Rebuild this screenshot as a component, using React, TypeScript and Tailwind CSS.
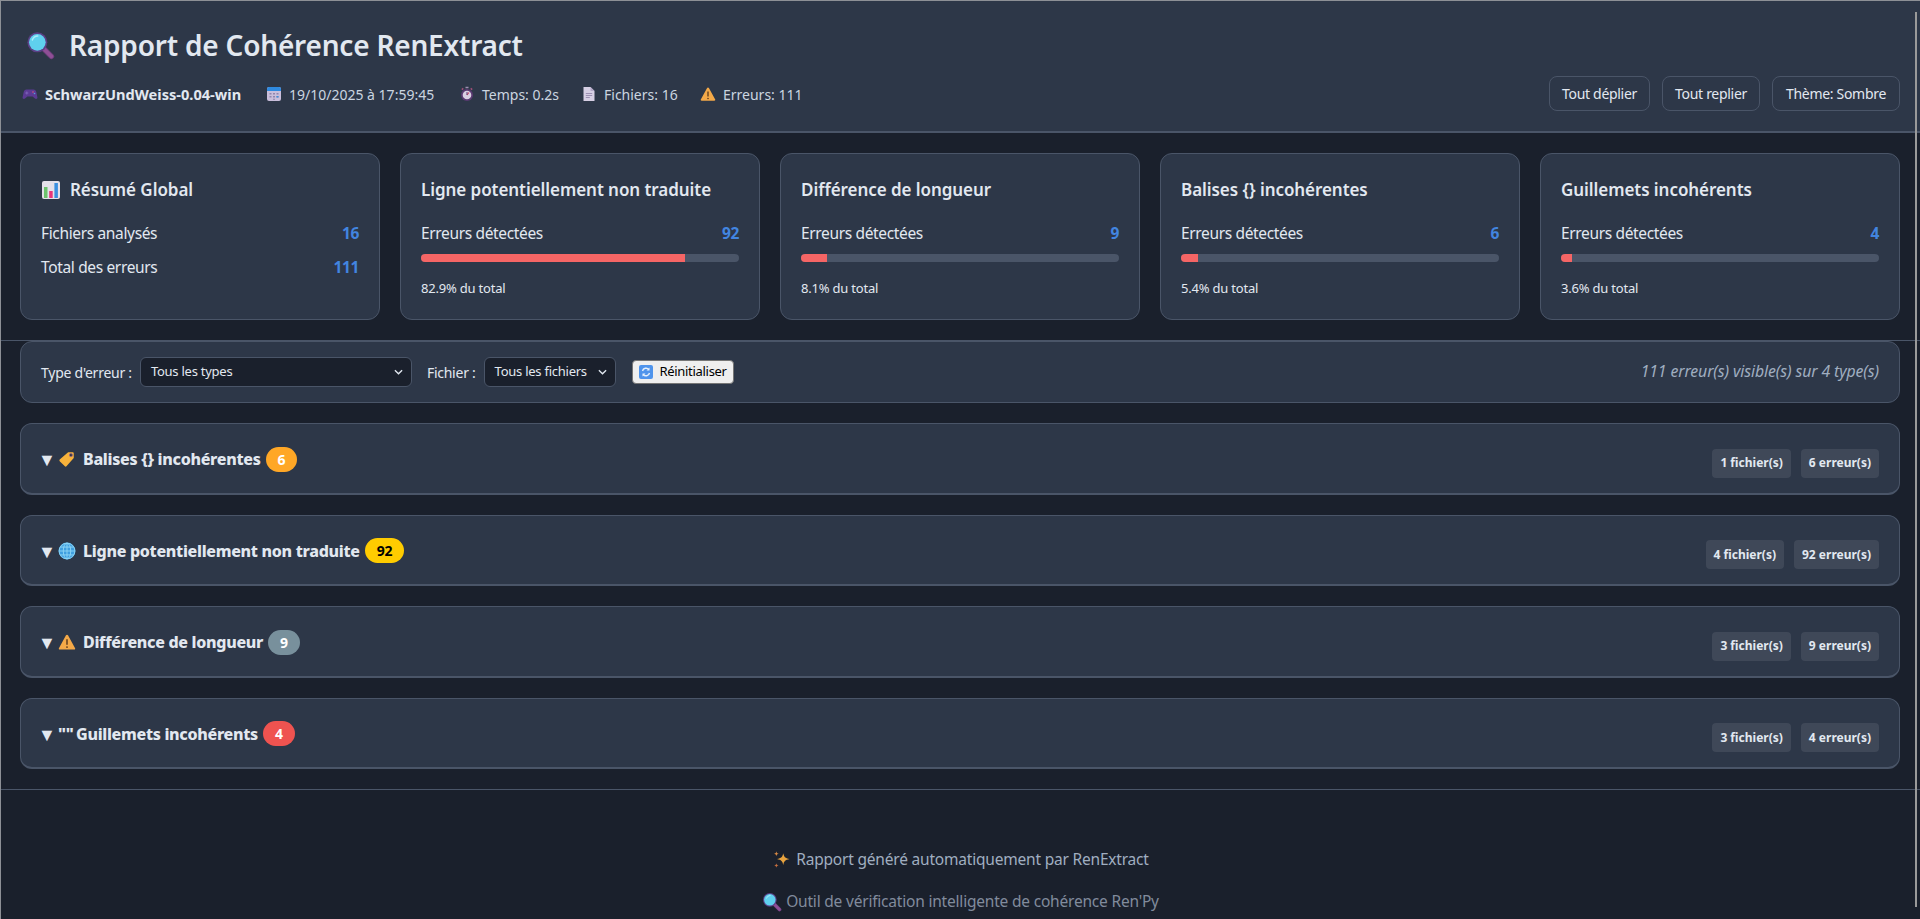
import type { ReactNode } from 'react';

const font = "font-['Noto_Sans','Open_Sans',sans-serif]";

function Loupe({ className }: { className: string }) {
  return (
    <svg viewBox="0 0 32 32" className={className}>
      <path d="M19 19l9 9" stroke="#6e3f7c" strokeWidth="6" strokeLinecap="round" />
      <path d="M20 20l8 8" stroke="#8f4f96" strokeWidth="4" strokeLinecap="round" />
      <circle cx="12.5" cy="12.5" r="11" fill="#5b3f86" />
      <circle cx="12.5" cy="12.5" r="9.2" fill="#5fd0ee" />
      <path d="M7 10a6.5 6.5 0 0 1 6-4.5" stroke="#a8ecfa" strokeWidth="1.6" fill="none" strokeLinecap="round" />
    </svg>
  );
}

function Gamepad() {
  return (
    <svg viewBox="0 0 16 16" className="h-4 w-4 shrink-0">
      <path d="M4.5 3.5h7c1.6 0 2.4 1 2.8 2.6l1.1 5.2c.3 1.4-1.3 2.3-2.4 1.3L10.6 10.500H5.400L3 12.600c-1.100 1-2.700.1-2.400-1.300l1.100-5.200C2.100 4.500 2.900 3.500 4.500 3.500z" fill="#5b3a93" />
      <path d="M3.300 7h3M4.800 5.500v3" stroke="#7d63b8" strokeWidth="1" />
      <circle cx="11" cy="6" r=".8" fill="#d9567c" />
      <circle cx="12.500" cy="7.500" r=".8" fill="#56a0d9" />
    </svg>
  );
}

function CalendarIcon() {
  return (
    <svg viewBox="0 0 16 16" className="h-4 w-4 shrink-0">
      <rect x="1" y="1" width="14" height="14" rx="2" fill="#c9bedb" />
      <path d="M1 5V3a2 2 0 0 1 2-2h10a2 2 0 0 1 2 2v2z" fill="#2f8ae0" />
      <path d="M3.500 7h2v1.500h-2zM7 7h2v1.500H7zM10.500 7h2v1.500h-2zM3.500 10h2v1.500h-2zM7 10h2v1.500H7zM10.500 10h2v1.500h-2zM7 12.800h2v1H7z" fill="#8f84ad" />
      <path d="M10.500 10h2v1.500h-2z" fill="#3f8fdc" />
    </svg>
  );
}

function Timer() {
  return (
    <svg viewBox="0 0 16 16" className="h-4 w-4 shrink-0">
      <path d="M6.500 1.500h3" stroke="#9d8fb0" strokeWidth="1.500" />
      <path d="M2.800 3.600l1.500-1.200M13.200 3.600l-1.500-1.200" stroke="#a34f7a" strokeWidth="1.500" />
      <circle cx="8" cy="9" r="6" fill="#5a3a72" />
      <circle cx="8" cy="9" r="4.300" fill="#d9cfe2" />
      <path d="M8 9l2-2.500" stroke="#d2405f" strokeWidth="1.200" />
      <path d="M8 6v3" stroke="#5a3a72" strokeWidth="1" />
    </svg>
  );
}

function Doc() {
  return (
    <svg viewBox="0 0 16 16" className="h-4 w-4 shrink-0">
      <path d="M2.500 1h7l4 4v10h-11z" fill="#d6cfe4" />
      <path d="M9.500 1l4 4h-4z" fill="#b4a9c9" />
      <path d="M4.800 7.500h6.400M4.800 9.500h6.400M4.800 11.500h4" stroke="#9c90b3" strokeWidth="1" />
    </svg>
  );
}

function Warning({ className = 'h-4 w-4' }: { className?: string }) {
  return (
    <svg viewBox="0 0 16 16" className={`${className} shrink-0`}>
      <path d="M8 1.500c.4 0 .7.200.9.600l6.300 11.400c.3.600-.1 1.200-.8 1.200H1.600c-.7 0-1.100-.6-.8-1.200L7.100 2.100c.2-.4.500-.6.900-.6z" fill="#f4a948" />
      <path d="M8 5.500v5" stroke="#5c3a1c" strokeWidth="1.300" />
      <circle cx="8" cy="12.500" r=".8" fill="#5c3a1c" />
    </svg>
  );
}

function BarChartIcon() {
  return (
    <svg viewBox="0 0 20 20" className="h-5 w-5 shrink-0">
      <rect x="1" y="1" width="18" height="18" rx="2" fill="#e4e0ea" />
      <rect x="3" y="7" width="3.500" height="11" fill="#6cc26c" />
      <rect x="8.200" y="11" width="3.500" height="7" fill="#e8357a" />
      <rect x="13.400" y="3" width="3.500" height="15" fill="#3b8fe0" />
    </svg>
  );
}

function RefreshIcon() {
  return (
    <svg viewBox="0 0 16 16" className="h-4 w-4 shrink-0">
      <rect x="1" y="1" width="14" height="14" rx="2" fill="#4f94ec" />
      <path d="M4.500 7a3.700 3.700 0 0 1 6.400-1.500M11.500 9a3.700 3.700 0 0 1-6.400 1.500" stroke="#e6f0fc" strokeWidth="1.400" fill="none" />
      <path d="M11.500 3.500v3h-3zM4.500 12.500v-3h3z" fill="#e6f0fc" />
    </svg>
  );
}

function Tag() {
  return (
    <svg viewBox="0 0 16 16" className="h-[18px] w-[18px] shrink-0">
      <path d="M9 2h4.200c.5 0 .8.300.8.800V7L7.500 14.500c-.4.400-1 .4-1.400 0L1.500 9.900c-.4-.4-.4-1 0-1.400z" fill="#f7b23b" />
      <circle cx="11.500" cy="4.500" r="1.400" fill="#2d3748" stroke="#a06a7a" strokeWidth=".8" />
    </svg>
  );
}

function Globe() {
  return (
    <svg viewBox="0 0 16 16" className="h-[18px] w-[18px] shrink-0" fill="none">
      <circle cx="8" cy="8" r="7.500" fill="#3f9fe0" />
      <g stroke="#8fd6f5" strokeWidth=".8">
        <circle cx="8" cy="8" r="7" />
        <ellipse cx="8" cy="8" rx="3.300" ry="7" />
        <path d="M8 1v14M1 8h14M2 4.500h12M2 11.500h12" />
      </g>
    </svg>
  );
}

function Sparkles() {
  return (
    <svg viewBox="0 0 16 16" className="h-5 w-5 shrink-0">
      <path d="M9 2.500c.6 3 1.500 3.900 5 4.700-3.500.8-4.400 1.700-5 4.800-.6-3.100-1.500-4-5-4.800 3.500-.8 4.400-1.700 5-4.700z" fill="#e8a33f" />
      <path d="M3.500 1c.2 1.300.6 1.700 2 2-1.400.3-1.800.7-2 2-.2-1.300-.6-1.700-2-2 1.400-.3 1.800-.7 2-2z" fill="#d98a45" />
      <path d="M3.500 10.500c.2 1.200.6 1.600 1.800 1.800-1.200.2-1.600.6-1.800 1.800-.2-1.200-.6-1.600-1.800-1.800 1.200-.2 1.600-.6 1.800-1.800z" fill="#c9703f" />
    </svg>
  );
}

function Meta({ icon, children, className }: { icon: ReactNode; children: ReactNode; className: string }) {
  return (
    <span className={`flex items-center gap-[7px] ${className}`}>
      {icon}
      {children}
    </span>
  );
}

function HeaderButton({ label, className }: { label: string; className: string }) {
  return (
    <button className={`h-[35px] rounded-lg border border-[#4a5568] text-[14px] tracking-[-0.3px] text-[#e2e8f0] ${className}`}>
      {label}
    </button>
  );
}

function StatCard({ title, count, pct }: { title: string; count: number; pct: number }) {
  return (
    <div className="h-[167px] w-[360px] rounded-xl border border-[#4a5568] bg-[#2d3748] p-5">
      <h3 className="mb-3 h-[32px] text-[17px] font-semibold leading-8 tracking-[-0.06px] text-[#e2e8f0]">{title}</h3>
      <div className="flex h-[32px] items-center justify-between text-[15.5px] tracking-[-0.35px] text-[#e2e8f0]">
        <span>Erreurs détectées</span>
        <span className="font-bold text-[#4285e0]">{count}</span>
      </div>
      <div className="mt-1 h-2 overflow-hidden rounded bg-[#4a5568]">
        <div className="h-full bg-[#f56565]" style={{ width: `${pct}%` }} />
      </div>
      <p className="mt-4 text-[13px] leading-5 tracking-[-0.2px] text-[#e2e8f0]">{pct}% du total</p>
    </div>
  );
}

const groups = [
  { icon: <Tag />, title: 'Balises {} incohérentes', count: 6, badge: 'bg-[#ffa726] text-white', files: 1 },
  { icon: <Globe />, title: 'Ligne potentiellement non traduite', count: 92, badge: 'bg-[#ffcc00] text-black', files: 4 },
  { icon: <Warning className="h-[18px] w-[18px]" />, title: 'Différence de longueur', count: 9, badge: 'bg-[#78909c] text-white', files: 3 },
  { icon: null, title: 'Guillemets incohérents', count: 4, badge: 'bg-[#ef5350] text-white', files: 3 },
];

export default function App() {
  return (
    <div className={`relative h-screen overflow-hidden border-l border-t border-[#8d9096] bg-[#1a202c] ${font} text-[#e2e8f0]`}>
      {/* Header */}
      <header className="h-[132px] border-b-2 border-[#4a5568] bg-[#2d3748] pl-[21px] pr-5 pt-5">
        <h1 className="mb-[7px] flex h-12 items-center gap-[14px] text-[28px] font-semibold tracking-[-0.2px] text-[#e2e8f0]">
          <Loupe className="ml-[4px] h-[29px] w-[29px] shrink-0" />
          Rapport de Cohérence RenExtract
        </h1>
        <div className="flex items-center justify-between">
          <div className="flex translate-y-[1px] items-center text-[14px] text-[#cbd5e0]">
            <Meta icon={<Gamepad />} className="w-[244px] text-[14.6px] font-bold text-[#e2e8f0]">SchwarzUndWeiss-0.04-win</Meta>
            <Meta icon={<CalendarIcon />} className="w-[193px]">19/10/2025 à 17:59:45</Meta>
            <Meta icon={<Timer />} className="w-[122px]">Temps: 0.2s</Meta>
            <Meta icon={<Doc />} className="w-[119px]">Fichiers: 16</Meta>
            <Meta icon={<Warning />} className="w-[110px]">Erreurs: 111</Meta>
          </div>
          <div className="flex gap-3">
            <HeaderButton label="Tout déplier" className="w-[101px]" />
            <HeaderButton label="Tout replier" className="w-[98px]" />
            <HeaderButton label="Thème: Sombre" className="w-[128px]" />
          </div>
        </div>
      </header>

      {/* Stats */}
      <section className="flex h-[208px] gap-5 border-b border-[#4a5568] pl-[19px] pr-5 pt-5">
        <div className="h-[167px] w-[360px] rounded-xl border border-[#4a5568] bg-[#2d3748] p-5">
          <h3 className="mb-3 flex h-[32px] items-center gap-[9px] text-[17px] font-semibold tracking-[-0.06px]">
            <BarChartIcon />
            Résumé Global
          </h3>
          <div className="flex h-[32px] items-center justify-between text-[15.5px] tracking-[-0.35px]">
            <span>Fichiers analysés</span>
            <span className="font-bold text-[#4285e0]">16</span>
          </div>
          <div className="mt-[2px] flex h-[32px] items-center justify-between text-[15.5px] tracking-[-0.35px]">
            <span>Total des erreurs</span>
            <span className="font-bold text-[#4285e0]">111</span>
          </div>
        </div>
        <StatCard title="Ligne potentiellement non traduite" count={92} pct={82.9} />
        <StatCard title="Différence de longueur" count={9} pct={8.1} />
        <StatCard title="Balises {} incohérentes" count={6} pct={5.4} />
        <StatCard title="Guillemets incohérents" count={4} pct={3.6} />
      </section>

      {/* Filters */}
      <div className="mb-5 ml-[19px] mr-5 flex h-[62px] items-center justify-between rounded-xl border border-[#4a5568] bg-[#2d3748] px-5">
        <div className="flex items-center text-[14px] tracking-[-0.25px]">
          <span className="mr-2">Type d'erreur :</span>
          <div className="relative flex h-[30px] w-[272px] items-center rounded-md border border-[#4a5568] bg-[#1a202c] pl-[10px] text-[13px] text-[#e2e8f0]">
            Tous les types
            <svg viewBox="0 0 10 6" className="absolute right-[8px] top-[11px] h-[6px] w-[9px]" fill="none" stroke="#e2e8f0" strokeWidth="1.500"><path d="M1 1l4 4 4-4" /></svg>
          </div>
          <span className="ml-[15px] mr-2">Fichier :</span>
          <div className="relative flex h-[30px] w-[132px] items-center rounded-md border border-[#4a5568] bg-[#1a202c] pl-[10px] text-[13px] text-[#e2e8f0]">
            Tous les fichiers
            <svg viewBox="0 0 10 6" className="absolute right-[8px] top-[11px] h-[6px] w-[9px]" fill="none" stroke="#e2e8f0" strokeWidth="1.500"><path d="M1 1l4 4 4-4" /></svg>
          </div>
          <button className="ml-4 flex h-[24px] w-[102px] items-center justify-center gap-[5px] rounded-[4px] border border-[#767676] bg-[#efefef] text-[13px] tracking-[-0.3px] text-black">
            <RefreshIcon />
            Réinitialiser
          </button>
        </div>
        <span className="text-[15.8px] italic tracking-[-0.1px] text-[#a0aec0]">111 erreur(s) visible(s) sur 4 type(s)</span>
      </div>

      {/* Groups */}
      <div className="flex flex-col gap-5 pl-[19px] pr-5">
        {groups.map((g) => (
          <div key={g.title} className="flex h-[71.5px] items-center justify-between rounded-xl border border-b-2 border-[#4a5568] bg-[#2d3748] px-5">
            <div className="flex items-center pt-[2px] text-[16px] font-extrabold tracking-[-0.3px] text-[#e2e8f0]">
              <span className="-ml-[3px] mr-[3px] w-[17px] text-[18px] leading-none">▼</span>
              {g.icon ? <span className="mr-[7px]">{g.icon}</span> : <span className="mr-1 w-[14px]">""</span>}
              <span>{g.title}</span>
              <span className={`ml-[5px] flex h-[25px] min-w-[31px] items-center justify-center rounded-full px-3 text-[14px] font-bold ${g.badge}`}>{g.count}</span>
            </div>
            <div className="mt-[10px] flex gap-[10px] text-[12px] font-bold">
              <span className="flex h-[29px] items-center rounded bg-[#3f4858] px-2">{g.files} fichier(s)</span>
              <span className="flex h-[29px] items-center rounded bg-[#3f4858] px-2">{g.count} erreur(s)</span>
            </div>
          </div>
        ))}
      </div>

      {/* Footer */}
      <footer className="mt-5 flex flex-col items-center border-t border-[#4a5568] pt-[57px] text-[15.5px] tracking-[-0.2px]">
        <p className="flex h-[26px] items-center gap-1 text-[#a0aec0]"><Sparkles />Rapport généré automatiquement par RenExtract</p>
        <p className="mt-4 flex h-[26px] items-center gap-[4px] text-[#818b9c]"><Loupe className="h-5 w-5 shrink-0" />Outil de vérification intelligente de cohérence Ren'Py</p>
      </footer>

      {/* Thin scrollbar overlay */}
      <div className="absolute bottom-3 right-[3px] top-[11px] w-[2px] bg-[#9a9a9a]" />
    </div>
  );
}
